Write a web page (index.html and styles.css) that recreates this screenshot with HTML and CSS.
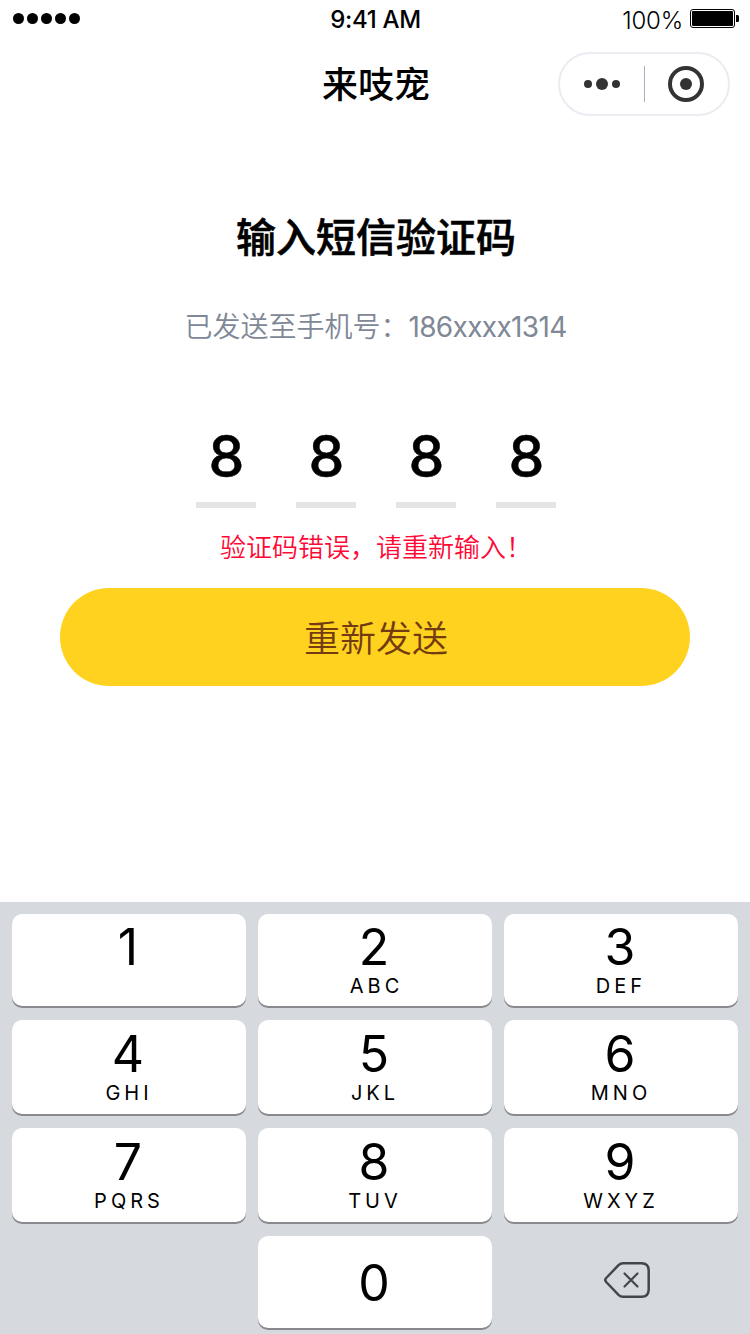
FILE: index.html
```html
<!DOCTYPE html>
<html lang="zh-CN">
<head>
<meta charset="utf-8">
<title>来吱宠</title>
<link rel="stylesheet" href="styles.css">
</head>
<body>
<div class="screen">
  <header class="status">
    <div class="signal"><i></i><i></i><i></i><i></i><i></i></div>
    <div class="clock">9:41 AM</div>
    <div class="power">
      <span class="percent">100%</span>
      <svg width="50" height="20" viewBox="0 0 50 20"><rect x=".5" y=".5" width="44" height="18" rx="2.5" fill="#fff" stroke="#000"/><rect x="2" y="2" width="41" height="15" rx="1" fill="#000"/><path d="M46 6h1.500a1.500 1.500 0 0 1 1.500 1.500v4a1.500 1.500 0 0 1-1.500 1.500h-1.500z" fill="#000"/></svg>
    </div>
  </header>
  <nav class="nav">
    <h1 class="nav-title">来吱宠</h1>
    <div class="capsule">
      <svg width="36" height="36" viewBox="0 0 36 36" fill="#333"><circle cx="4" cy="18" r="4"/><circle cx="18" cy="18" r="6"/><circle cx="32" cy="18" r="4"/></svg>
      <span class="divider"></span>
      <svg width="36" height="36" viewBox="0 0 36 36"><circle cx="18" cy="18" r="16" fill="none" stroke="#333" stroke-width="4"/><circle cx="18" cy="18" r="6" fill="#333"/></svg>
    </div>
  </nav>
  <main class="content">
    <h2 class="heading">输入短信验证码</h2>
    <p class="sent">已发送至手机号：<span class="phone">186xxxx1314</span></p>
    <div class="code"><span>8</span><span>8</span><span>8</span><span>8</span></div>
    <p class="error">验证码错误，请重新输入！</p>
    <button class="resend">重新发送</button>
  </main>
  <section class="keypad">
    <div class="key top"><b>1</b><small></small></div>
    <div class="key top"><b>2</b><small class="abc">ABC</small></div>
    <div class="key top"><b>3</b><small>DEF</small></div>
    <div class="key"><b>4</b><small>GHI</small></div>
    <div class="key"><b>5</b><small>JKL</small></div>
    <div class="key"><b>6</b><small>MNO</small></div>
    <div class="key"><b>7</b><small>PQRS</small></div>
    <div class="key"><b>8</b><small>TUV</small></div>
    <div class="key"><b>9</b><small>WXYZ</small></div>
    <div class="key zero"><b>0</b></div>
    <div class="delete"><svg width="46" height="36" viewBox="0 0 46 36" fill="none" stroke="#43464b" stroke-linecap="round" stroke-linejoin="round"><path stroke-width="2.500" d="M19 1.250H37.500Q44.700 1.250 44.700 8.500V27.500Q44.700 34.750 37.500 34.750H19Q16.500 34.750 14.500 32.800L2.200 20Q.4 18 2.200 16L14.500 3.200Q16.500 1.250 19 1.250Z"/><path stroke-width="2.200" d="M20.500 11.500L33.500 24.500M33.500 11.500L20.500 24.500"/></svg></div>
  </section>
</div>
</body>
</html>
```
FILE: styles.css
```css
* { box-sizing: border-box; margin: 0; padding: 0; }
body { font-family: Inter, "Noto Sans CJK SC", sans-serif; background: #fff; color: #000; }
.screen { width: 750px; height: 1334px; display: flex; flex-direction: column; overflow: hidden; }

.status { height: 40px; display: grid; grid-template-columns: 1fr auto 1fr; align-items: center; padding: 0 10px 0 13px; }
.signal { display: flex; gap: 3px; padding-bottom: 3px; }
.signal i { width: 11px; height: 11px; border-radius: 50%; background: #000; }
.clock { font-size: 24px; font-weight: 450; line-height: 40px; letter-spacing: -0.3px; padding-right: 2px; }
.power { display: flex; justify-content: flex-end; align-items: center; gap: 7px; }
.power svg { margin-bottom: 2px; }
.percent { font-size: 24px; line-height: 38px; padding-top: 2px; font-weight: 350; letter-spacing: -0.2px; }

.nav { height: 88px; display: grid; grid-template-columns: 1fr auto 1fr; align-items: center; padding-right: 20px; }
.nav-title { grid-column: 2; font-size: 36px; font-weight: 500; line-height: 52px; padding: 2px 0 0 22px; }
.capsule { justify-self: end; width: 172px; height: 64px; border: 2px solid #ebebf2; border-radius: 32px; display: flex; align-items: center; justify-content: space-between; padding: 0 24px; }
.capsule svg { display: block; }
.divider { width: 1px; height: 36px; background: #a5adc0; }

.content { flex: 1; display: flex; flex-direction: column; align-items: center; padding-top: 80px; }
.heading { font-size: 40px; font-weight: 500; line-height: 60px; padding-left: 2px; -webkit-text-stroke: 0.6px #000; }
.sent { margin-top: 39px; padding-left: 1px; font-size: 28px; font-weight: 350; line-height: 40px; color: #7f8896; }
.phone { font-weight: 400; letter-spacing: -0.65px; }
.code { display: flex; gap: 40px; padding-left: 2px; margin-top: 77px; }
.code span { width: 60px; height: 84px; border-bottom: 6px solid #e4e4e4; padding: 1px 0 0 1px; text-align: center; font-size: 57px; font-weight: 500; line-height: 64px; -webkit-text-stroke: 0.5px #000; }
.error { margin-top: 20px; padding-left: 2px; font-size: 26px; line-height: 40px; font-weight: 350; color: #ff0836; }
.resend { margin-top: 20px; width: 630px; height: 98px; border: 0; border-radius: 49px; padding-left: 2px; background: #ffd21f; color: #733b10; font: 350 36px/96px "Noto Sans CJK SC", sans-serif; padding-bottom: 2px; }

.keypad { height: 432px; background: #d6d9de; padding: 12px 12px 0; display: grid; grid-template-columns: repeat(3, 234px); grid-template-rows: 92px 94px 94px 92px; gap: 14px 12px; }
.key { background: #fff; border-radius: 10px; box-shadow: 0 2px 0 #88898c; display: flex; flex-direction: column; align-items: center; justify-content: center; padding-top: 2px; }
.key.top { padding-top: 1px; }
.key b { font-size: 50px; font-weight: 400; line-height: 50px; padding-right: 2px; }
.key small { height: 28px; font-size: 20px; font-weight: 380; line-height: 28px; letter-spacing: 4px; }
.key .abc { padding-left: 3px; }
.zero { grid-column: 2; }
.delete { display: flex; align-items: center; justify-content: center; padding: 0 0 4px 11px; }
```
